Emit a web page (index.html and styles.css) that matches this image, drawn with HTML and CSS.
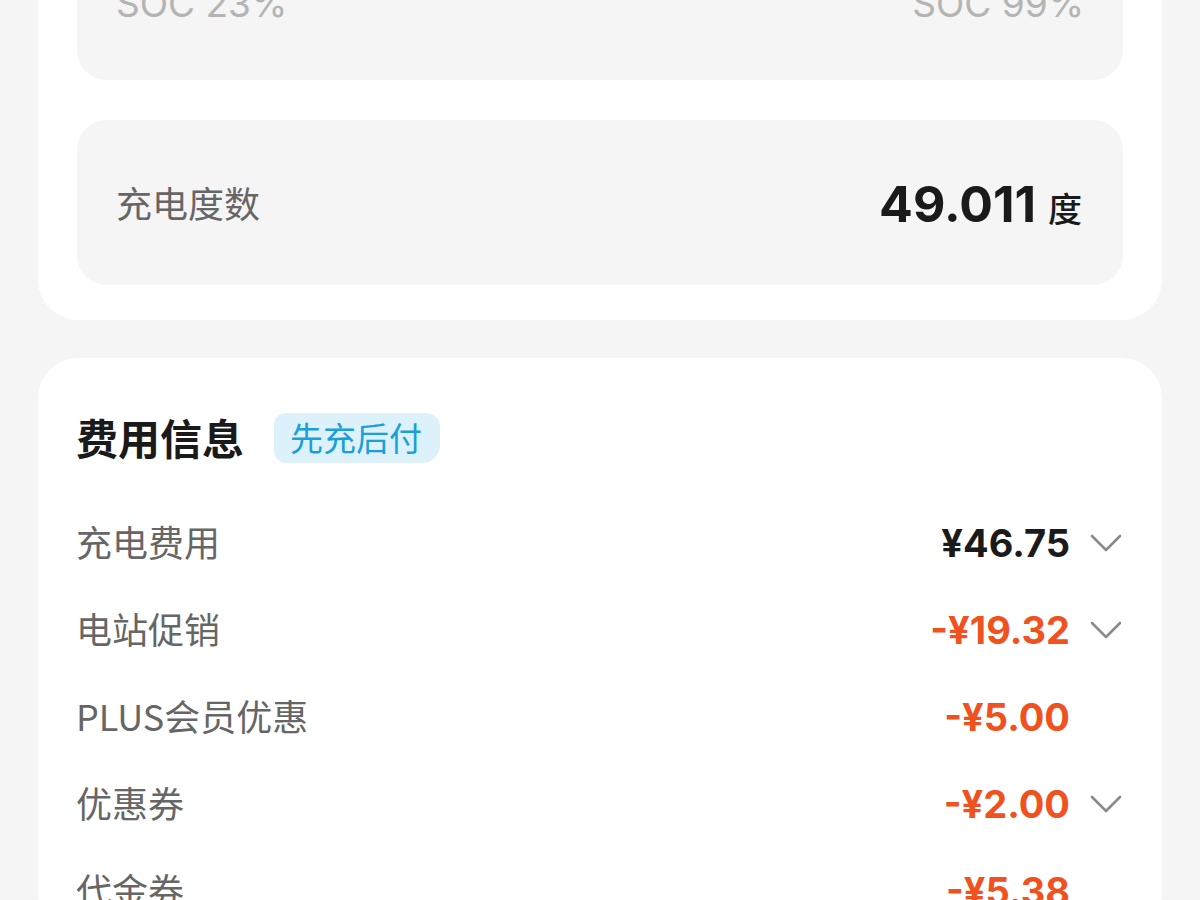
FILE: index.html
```html
<!DOCTYPE html>
<html lang="zh-CN">
<head>
    <meta charset="UTF-8">
    <meta name="viewport" content="width=device-width, initial-scale=1.0">
    <title>订单详情</title>
    <link rel="stylesheet" href="styles.css">
</head>
<body>

<div class="page">
    <div class="card charge-card">
        <div class="soc-box">
            <span>SOC 23%</span>
            <span>SOC 99%</span>
        </div>
        <div class="energy-box">
            <span class="energy-label">充电度数</span>
            <span class="energy-value"><b>49.011</b><em>度</em></span>
        </div>
    </div>

    <div class="card fee-card">
        <div class="fee-title">
            <h2>费用信息</h2>
            <span class="badge">先充后付</span>
        </div>

        <div class="fee-row">
            <span class="fee-label">充电费用</span>
            <span class="fee-right">
                <span class="fee-value">¥46.75</span>
                <span class="arrow"><svg width="52" height="32" viewBox="0 0 52 32"><path d="M20 9 L34 23 L48 9" /></svg></span>
            </span>
        </div>
        <div class="fee-row">
            <span class="fee-label">电站促销</span>
            <span class="fee-right">
                <span class="fee-value minus">-¥19.32</span>
                <span class="arrow"><svg width="52" height="32" viewBox="0 0 52 32"><path d="M20 9 L34 23 L48 9" /></svg></span>
            </span>
        </div>
        <div class="fee-row">
            <span class="fee-label">PLUS会员优惠</span>
            <span class="fee-right">
                <span class="fee-value minus">-¥5.00</span>
                <span class="arrow"></span>
            </span>
        </div>
        <div class="fee-row">
            <span class="fee-label">优惠券</span>
            <span class="fee-right">
                <span class="fee-value minus">-¥2.00</span>
                <span class="arrow"><svg width="52" height="32" viewBox="0 0 52 32"><path d="M20 9 L34 23 L48 9" /></svg></span>
            </span>
        </div>
        <div class="fee-row">
            <span class="fee-label">代金券</span>
            <span class="fee-right">
                <span class="fee-value minus">-¥5.38</span>
                <span class="arrow"></span>
            </span>
        </div>
    </div>
</div>

</body>
</html>
```

FILE: styles.css
```css
body {
    margin: 0;
    padding: 0;
    background-color: #f5f5f5;
    font-family: "Noto Sans CJK SC", "Noto Sans", sans-serif;
    height: 900px;
    overflow: hidden;
}
.page {
    margin-top: -60px;
    padding: 0 38px;
}
.card {
    background-color: #fff;
    border-radius: 40px;
}
.charge-card {
    padding: 0 39px 35px;
}
.soc-box {
    display: flex;
    justify-content: space-between;
    padding: 44px 39px 56px;
    background-color: #f5f5f5;
    border-radius: 0 0 30px 30px;
    font-family: Inter, "Noto Sans", sans-serif;
    font-size: 37px;
    line-height: 40px;
    color: #b4b4b4;
}
.energy-box {
    display: flex;
    justify-content: space-between;
    align-items: center;
    height: 165px;
    margin-top: 40px;
    padding: 0 41px 0 39px;
    background-color: #f5f5f5;
    border-radius: 30px;
}
.energy-label {
    font-size: 36px;
    color: #666;
    margin-bottom: 2px;
}
.energy-value {
    display: flex;
    align-items: baseline;
    margin-top: 2px;
}
.energy-value b {
    font-family: Inter, "Noto Sans", sans-serif;
    font-size: 50px;
    font-weight: 700;
    color: #1a1a1a;
}
.energy-value em {
    font-style: normal;
    font-size: 34px;
    font-weight: 500;
    color: #1a1a1a;
    margin-left: 12px;
}
.fee-card {
    margin-top: 38px;
    padding: 55px 40px 0;
}
.fee-title {
    display: flex;
    align-items: center;
    height: 50px;
    margin-bottom: 36px;
}
.fee-title h2 {
    margin: -3px 0 0 -2px;
    font-size: 42px;
    font-weight: 700;
    color: #1a1a1a;
}
.badge {
    margin-left: 30px;
    padding: 0 18px 0 16px;
    height: 50px;
    line-height: 48px;
    font-size: 33px;
    color: #1a9fd9;
    background-color: #ddf1fa;
    border-radius: 12px 14px 18px 12px;
}
.fee-row {
    display: flex;
    justify-content: space-between;
    align-items: center;
    height: 87px;
}
.fee-label {
    font-size: 36px;
    color: #666;
    margin: -4px 0 0 -2px;
}
.fee-right {
    display: flex;
    align-items: center;
}
.fee-value {
    font-family: Inter, "Noto Sans", sans-serif;
    font-size: 38px;
    font-weight: 700;
    color: #1a1a1a;
    margin-right: 2px;
}
.fee-value.minus {
    color: #f0521f;
}
.arrow {
    display: block;
    width: 50px;
    height: 32px;
}
.arrow svg {
    display: block;
}
.arrow path {
    fill: none;
    stroke: #8a8a8a;
    stroke-width: 2.6;
    stroke-linecap: round;
    stroke-linejoin: round;
}
```
